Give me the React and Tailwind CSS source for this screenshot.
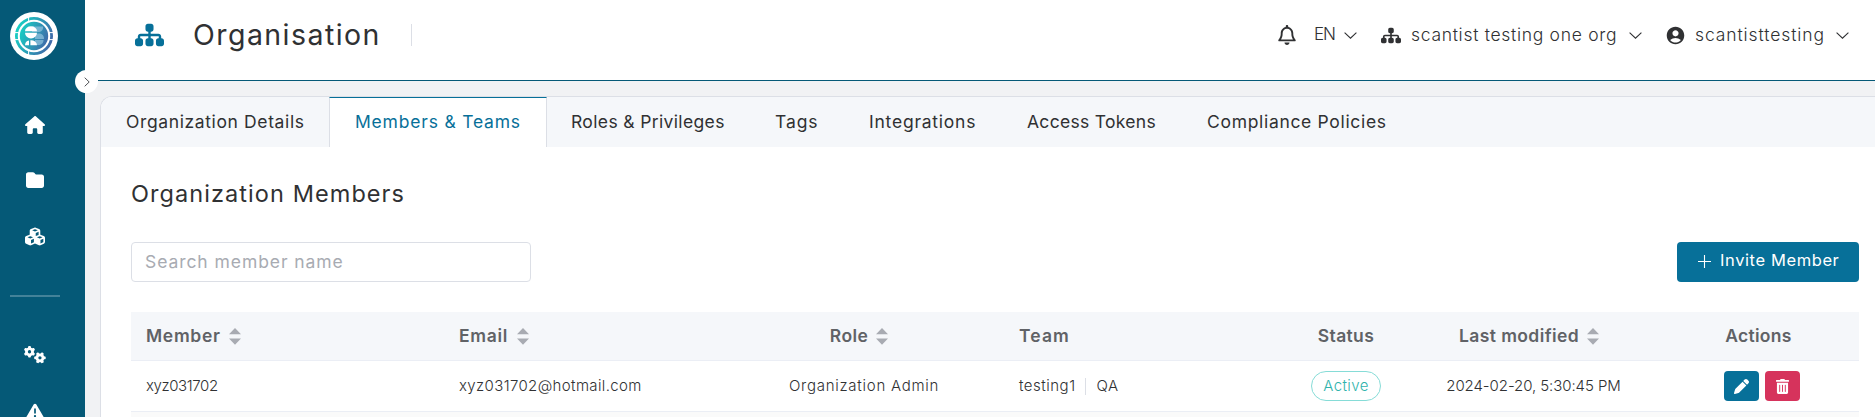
import React from 'react';
import {
  FaHouse,
  FaFolder,
  FaCubes,
  FaGears,
  FaTriangleExclamation,
  FaSitemap,
  FaRegBell,
  FaPen,
} from 'react-icons/fa6';
import { FaTrashAlt } from 'react-icons/fa';
import { MdAccountCircle } from 'react-icons/md';

function Logo() {
  return (
    <svg viewBox="0 0 48 48" className="h-12 w-12">
      <defs>
        <linearGradient id="ring" x1="0" y1="0.3" x2="1" y2="0.7">
          <stop offset="0" stopColor="#17cfc4" />
          <stop offset="1" stopColor="#4068a8" />
        </linearGradient>
      </defs>
      <circle cx="24" cy="24" r="24" fill="#fff" />
      <circle cx="24" cy="24" r="17.6" fill="none" stroke="url(#ring)" strokeWidth="2.8" />
      <path d="M18.6 4v6M18.6 38v6M4 20.6h5M4 27.6h5M39 20.6h5M39 27.6h5" stroke="#fff" strokeWidth="1" />
      <circle cx="24" cy="24" r="14.2" fill="url(#ring)" />
      <path d="M22 14.5h11a4.5 4.5 0 0 1-3.5 5.5H22zM25 21.5h5a5.5 5.5 0 0 1 4 5.5h-9zM25 28h8.5a5 5 0 0 1-4 5H25z" fill="#8fc0dc" opacity=".75" />
      <path d="M15 19.2a6 5 0 0 1 12 0zM15 20.8h12a6 5.6 0 0 1-12 0zM15 33.2a5 5 0 0 1 4-4.8v4.8zM20.400 28.200a6 5 0 0 1 6.600 5h-6.600z" fill="#fff" />
    </svg>
  );
}

function Chevron({ className = '' }) {
  return (
    <svg viewBox="0 0 13 7" className={`h-[7px] w-[13px] shrink-0 ${className}`} fill="none" stroke="#303133" strokeWidth="1.1">
      <path d="M.6.6 6.500 6.200 12.400.6" />
    </svg>
  );
}

function Sort() {
  return (
    <span className="flex w-6 shrink-0 justify-center">
      <svg viewBox="0 0 12 17" className="h-[17px] w-3" fill="#a8abb2">
        <path d="M0 6.200 6 0l6 6.200zM0 10.500h12L6 16.700z" />
      </svg>
    </span>
  );
}

function Sidebar() {
  return (
    <aside className="relative flex w-[85px] shrink-0 flex-col bg-[#055977] text-white">
      <div className="pt-[11.5px] pl-2.5">
        <Logo />
      </div>
      <nav className="flex w-[70px] flex-col items-center">
        <FaHouse className="mt-[56px] h-[18px] w-5" />
        <FaFolder className="mt-[37.5px] h-[18px] w-[18px]" />
        <FaCubes className="mt-[37.5px] h-[19px] w-5" />
        <div className="mt-[49px] h-0.5 w-[50px] bg-white/25" />
        <FaGears className="mt-[48px] h-[19px] w-[22px]" />
        <FaTriangleExclamation className="mt-[38px] h-[19px] w-[18px]" />
      </nav>
      <button className="absolute top-[70px] left-[75px] z-10 flex h-[23px] w-[23px] items-center justify-center rounded-full bg-white">
        <svg viewBox="0 0 6 10" className="h-2.5 w-1.5" fill="none" stroke="#505256">
          <path d="M.7.7 5.200 5 .7 9.300" />
        </svg>
      </button>
    </aside>
  );
}

function Header() {
  return (
    <header className="ml-[13px] flex h-[81px] shrink-0 items-start border-b border-[#055977] bg-white text-[#303133]">
      <div className="flex h-[70px] flex-1 items-center pl-[37px]">
        <FaSitemap className="h-[26px] w-[29px] text-[#077099]" />
        <h1 className="ml-[29px] text-[28.5px] font-[430] tracking-[1.45px]">Organisation</h1>
        <div className="ml-[30px] h-[22px] w-px bg-[#dcdfe6]" />
      </div>
      <div className="flex h-[70px] items-center text-[17.5px] font-light whitespace-nowrap">
        <FaRegBell className="h-5 w-[18px]" />
        <span className="ml-[18px] w-[30px] text-[17px] tracking-[-1px]">EN</span>
        <Chevron />
        <FaSitemap className="ml-6 h-[19px] w-5" />
        <span className="ml-2.5 w-[218px] tracking-[0.7px]">scantist testing one org</span>
        <Chevron />
        <MdAccountCircle className="ml-[23px] h-[21px] w-[21px]" />
        <span className="ml-[9px] w-[141px] tracking-[0.9px]">scantisttesting</span>
        <Chevron className="mr-[26px]" />
      </div>
    </header>
  );
}

const tabs = [
  { label: 'Organization Details', cls: 'w-[228px] pl-[25px] tracking-[0.62px]' },
  { label: 'Members & Teams', cls: 'w-[218px] border-x border-x-[#dcdfe6] border-t border-t-[#077099] bg-white pl-[25px] text-[#077099] tracking-[0.8px]' },
  { label: 'Roles & Privileges', cls: 'w-[205px] pl-[24px] tracking-[0.36px]' },
  { label: 'Tags', cls: 'w-[93px] pl-[23px] tracking-[0.9px]' },
  { label: 'Integrations', cls: 'w-[158px] pl-[24px] tracking-[0.77px]' },
  { label: 'Access Tokens', cls: 'w-[180px] pl-[24px] tracking-[0.3px]' },
  { label: 'Compliance Policies', cls: 'w-[230px] pl-[24px] tracking-[0.68px]' },
];

function Tabs() {
  return (
    <div className="flex h-[50px] bg-[#f5f7fa] text-[17.5px] font-[430]">
      {tabs.map((t) => (
        <div key={t.label} className={`flex items-center whitespace-nowrap ${t.cls}`}>
          {t.label}
        </div>
      ))}
    </div>
  );
}

const cols = 'grid grid-cols-[312px_281px_280px_280px_124px_251px_200px] items-center whitespace-nowrap';

function Members() {
  return (
    <div className="mr-4 ml-[30px]">
      <div className={`${cols} h-[49px] border-b border-[#ebeef5] bg-[#f5f7fa] text-[17.5px] font-semibold text-[#606266]`}>
        <div className="flex items-center pl-[15px]">
          <span className="mr-[2px] tracking-[0.7px]">Member</span>
          <Sort />
        </div>
        <div className="flex items-center pl-[16px]">
          <span className="mr-[3px] tracking-[0.7px]">Email</span>
          <Sort />
        </div>
        <div className="flex items-center justify-center pr-[4px]">
          <span className="mr-[2px] tracking-[0.4px]">Role</span>
          <Sort />
        </div>
        <div className="pl-[15px] tracking-[1.1px]">Team</div>
        <div className="text-center tracking-[0.35px]">Status</div>
        <div className="flex items-center justify-center pr-[3px]">
          <span className="mr-[2px] tracking-[0.4px]">Last modified</span>
          <Sort />
        </div>
        <div className="pr-px text-center tracking-[0.3px]">Actions</div>
      </div>
      <div className={`${cols} h-[51px] border-b border-[#ebeef5] text-[15px] font-light text-[#303133]`}>
        <div className="pt-px pl-[15px] tracking-[-0.4px]">xyz031702</div>
        <div className="pt-px pl-[16px] tracking-[0.37px]">xyz031702@hotmail.com</div>
        <div className="text-center tracking-[0.74px]">Organization Admin</div>
        <div className="flex items-center pl-[15px]">
          <span className="tracking-[0.5px]">testing1</span>
          <span className="mr-[11px] ml-[9px] h-[17px] w-px bg-[#dcdfe6]" />
          <span className="tracking-[0.5px]">QA</span>
        </div>
        <div className="flex justify-center">
          <span className="flex h-[30px] w-[70px] items-center justify-center rounded-full border border-[#86dcd7] pt-px font-[350] tracking-[0.4px] text-[#2fb3ac]">
            Active
          </span>
        </div>
        <div className="pt-px text-center tracking-[-0.08px]">2024-02-20, 5:30:45 PM</div>
        <div className="flex justify-center gap-1.5 pl-1.5 text-white">
          <button className="flex h-[30px] w-[35px] items-center justify-center rounded bg-[#077099]">
            <FaPen className="h-[15px] w-[15px]" />
          </button>
          <button className="flex h-[30px] w-[35px] items-center justify-center rounded bg-[#d6335c]">
            <FaTrashAlt className="h-[15px] w-[13px]" />
          </button>
        </div>
      </div>
      <div className="h-[50px] bg-[#fafafa]" />
    </div>
  );
}

export default function App() {
  return (
    <div className="flex h-[417px] w-[1875px] overflow-hidden bg-white font-['Inter',sans-serif] text-[#303133]">
      <Sidebar />
      <div className="flex min-w-0 flex-1 flex-col bg-[linear-gradient(#fff_80px,#f1f2f4_80px)]">
        <Header />
        <main className="mt-[15px] ml-[15px] flex-1 overflow-hidden rounded-tl-[12px] border-t border-l border-[#dcdfe6] bg-white">
          <Tabs />
          <div className="mr-4 ml-[30px]">
            <h2 className="mt-[29px] text-[23.5px] leading-9 font-[430] tracking-[1.07px]">Organization Members</h2>
            <div className="mt-[30px] mb-[30px] flex h-10 justify-between">
              <input
                className="h-10 w-[400px] rounded border border-[#dcdfe6] px-[13px] pb-px text-[17.5px] tracking-[0.93px] outline-none placeholder:text-[#a8abb2]"
                placeholder="Search member name"
              />
              <button className="flex h-10 w-[182px] items-center rounded bg-[#077099] pb-1 pl-[21px] text-[16.5px] tracking-[0.6px] whitespace-nowrap text-white">
                <svg viewBox="0 0 13 13" className="mr-[9px] h-[13px] w-[13px] translate-y-px" stroke="#fff" strokeWidth="1.1">
                  <path d="M6.500 0v13M0 6.500h13" />
                </svg>
                Invite Member
              </button>
            </div>
          </div>
          <Members />
        </main>
      </div>
    </div>
  );
}
